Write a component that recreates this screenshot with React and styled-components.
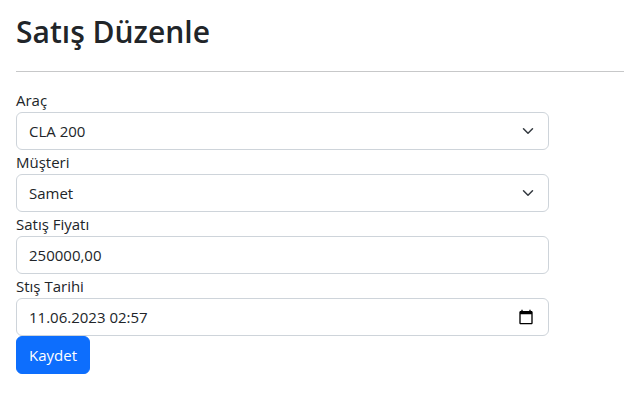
import React from "react";
import styled, { createGlobalStyle } from "styled-components";

const GlobalStyle = createGlobalStyle`
  *, *::before, *::after { box-sizing: border-box; }
  body {
    margin: 0;
    background: #fff;
    color: #212529;
    font-family: "Segoe UI", "Open Sans", "Noto Sans", sans-serif;
    font-size: 15px;
    line-height: 24px;
  }
`;

const Page = styled.main`
  padding: 12px 0 24px 16px;
`;

const Title = styled.h1`
  margin: 0;
  font-size: 30px;
  font-weight: 600;
  line-height: 40px;
`;

const Divider = styled.hr`
  margin: 19px 0 16px;
  border: 0;
  border-top: 1px solid #c7c8c9;
`;

const Form = styled.form`
  display: flex;
  flex-direction: column;
  align-items: flex-start;
  padding-right: 75px;
`;

const Field = styled.div`
  display: flex;
  flex-direction: column;
  width: 100%;
`;

const Label = styled.label`
  display: block;
`;

const ControlBox = styled.div`
  display: grid;
  grid-template-columns: minmax(0, 1fr) auto;
  align-items: center;
  height: 38px;
  border: 1px solid #ced4da;
  border-radius: 6px;
  background: #fff;

  &:focus-within {
    border-color: #86b7fe;
    box-shadow: 0 0 0 4px rgba(13, 110, 253, 0.25);
  }
`;

const Input = styled.input`
  grid-area: 1 / 1;
  width: 100%;
  height: 36px;
  padding: 0 12px;
  border: 0;
  outline: 0;
  background: transparent;
  color: inherit;
  font: inherit;
`;

const Select = styled.select`
  grid-area: 1 / 1 / 2 / 3;
  width: 100%;
  height: 36px;
  padding: 0 36px 0 12px;
  appearance: none;
  border: 0;
  outline: 0;
  background: transparent;
  color: inherit;
  font: inherit;
`;

const Chevron = styled.svg`
  grid-area: 1 / 2;
  width: 16px;
  height: 12px;
  margin-right: 12px;
  pointer-events: none;
`;

const PickerButton = styled.button`
  grid-area: 1 / 2;
  display: flex;
  margin-right: 14px;
  padding: 0;
  border: 0;
  background: transparent;
  color: #000;
  cursor: pointer;
`;

const SubmitButton = styled.button`
  height: 38px;
  padding: 0 12px;
  border: 1px solid #0d6efd;
  border-radius: 6px;
  background: #0d6efd;
  color: #fff;
  font: inherit;
  cursor: pointer;
`;

function SelectField({ id, label, value }) {
  return (
    <Field>
      <Label htmlFor={id}>{label}</Label>
      <ControlBox>
        <Select id={id} defaultValue={value}>
          <option value={value}>{value}</option>
        </Select>
        <Chevron viewBox="0 0 16 16" aria-hidden="true">
          <path
            fill="none"
            stroke="#343a40"
            strokeLinecap="round"
            strokeLinejoin="round"
            strokeWidth="2"
            d="m2 5 6 6 6-6"
          />
        </Chevron>
      </ControlBox>
    </Field>
  );
}

function TextField({ id, label, value, children }) {
  return (
    <Field>
      <Label htmlFor={id}>{label}</Label>
      <ControlBox>
        <Input id={id} type="text" defaultValue={value} />
        {children}
      </ControlBox>
    </Field>
  );
}

export default function App() {
  return (
    <>
      <GlobalStyle />
      <Page lang="tr">
        <Title>Satış Düzenle</Title>
        <Divider />
        <Form onSubmit={(event) => event.preventDefault()}>
          <SelectField id="car" label="Araç" value="CLA 200" />
          <SelectField id="customer" label="Müşteri" value="Samet" />
          <TextField id="price" label="Satış Fiyatı" value="250000,00" />
          <TextField id="date" label="Stış Tarihi" value="11.06.2023 02:57">
            <PickerButton type="button" aria-label="Tarih seç">
              <svg width="16" height="16" viewBox="0 0 24 24" aria-hidden="true">
                <path
                  fill="currentColor"
                  d="M20 3h-1V1h-2v2H7V1H5v2H4c-1.1 0-2 .9-2 2v16c0 1.1.9 2 2 2h16c1.1 0 2-.9 2-2V5c0-1.1-.9-2-2-2zm0 18H4V8h16v13z"
                />
              </svg>
            </PickerButton>
          </TextField>
          <SubmitButton type="submit">Kaydet</SubmitButton>
        </Form>
      </Page>
    </>
  );
}
